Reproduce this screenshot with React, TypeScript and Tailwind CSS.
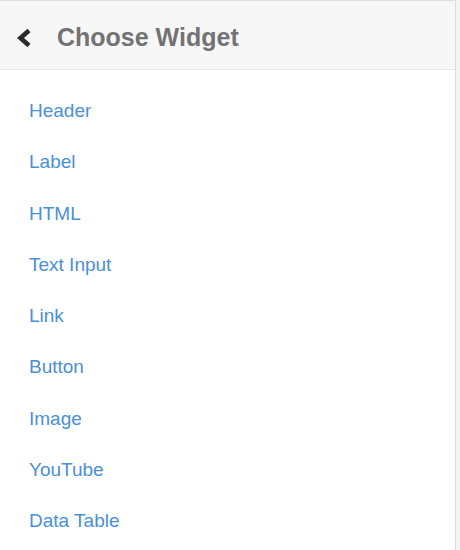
const widgets = [
  "Header",
  "Label",
  "HTML",
  "Text Input",
  "Link",
  "Button",
  "Image",
  "YouTube",
  "Data Table",
];

function ChooseWidget() {
  return (
    <div className="w-[456px] h-[550px] bg-white border-t border-r border-[#dcdcdc] flex flex-col">
      <div className="h-[69px] bg-[#f7f7f7] border-b border-[#e8e8e8] flex items-center pt-[5px]">
        <button className="ml-[15px] w-[18px] h-[24px] flex items-center justify-center">
          <svg width="16" height="22" viewBox="0 0 16 22">
            <polyline
              points="13,3.5 4.5,11 13,18.5"
              fill="none"
              stroke="#2b2b2b"
              strokeWidth="4.6"
            />
          </svg>
        </button>
        <span className="ml-[24px] text-[25px] leading-none font-bold text-[#737373]">
          Choose Widget
        </span>
      </div>
      <ul className="pt-[15px] flex flex-col">
        {widgets.map((name) => (
          <li key={name} className="h-[51.25px] flex items-center pl-[29px]">
            <a href="#" className="text-[19px] leading-none text-[#4a90d6]">
              {name}
            </a>
          </li>
        ))}
      </ul>
    </div>
  );
}

export default function App() {
  return (
    <div
      className="w-[460px] h-[550px] bg-[#f4f4f4] overflow-hidden"
      style={{ fontFamily: '"Liberation Sans", Arial, sans-serif' }}
    >
      <ChooseWidget />
    </div>
  );
}
